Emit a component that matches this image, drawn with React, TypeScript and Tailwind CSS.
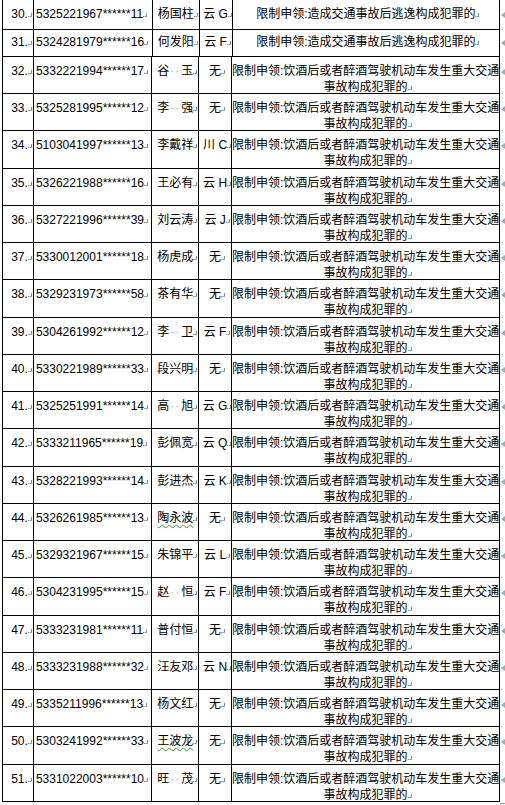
import React from 'react';

type Row = { no: string; id: string; name: string; plate: string; flee?: boolean; wavy?: boolean };

const rows: Row[] = [
  { no: '30', id: '5325221967******11', name: '杨国柱', plate: '云 G', flee: true },
  { no: '31', id: '5324281979******16', name: '何发阳', plate: '云 F', flee: true },
  { no: '32', id: '5332221994******17', name: '谷　玉', plate: '无' },
  { no: '33', id: '5325281995******12', name: '李　强', plate: '无' },
  { no: '34', id: '5103041997******13', name: '李戴祥', plate: '川 C' },
  { no: '35', id: '5326221988******16', name: '王必有', plate: '云 H' },
  { no: '36', id: '5327221996******39', name: '刘云涛', plate: '云 J' },
  { no: '37', id: '5330012001******18', name: '杨虎成', plate: '无' },
  { no: '38', id: '5329231973******58', name: '茶有华', plate: '无' },
  { no: '39', id: '5304261992******12', name: '李　卫', plate: '云 F' },
  { no: '40', id: '5330221989******33', name: '段兴明', plate: '无' },
  { no: '41', id: '5325251991******14', name: '高　旭', plate: '云 G' },
  { no: '42', id: '5333211965******19', name: '彭佩宽', plate: '云 Q' },
  { no: '43', id: '5328221993******14', name: '彭进杰', plate: '云 K' },
  { no: '44', id: '5326261985******13', name: '陶永波', plate: '无', wavy: true },
  { no: '45', id: '5329321967******15', name: '朱锦平', plate: '云 L' },
  { no: '46', id: '5304231995******15', name: '赵　恒', plate: '云 F' },
  { no: '47', id: '5333231981******11', name: '普付恒', plate: '无' },
  { no: '48', id: '5333231988******32', name: '汪友邓', plate: '云 N' },
  { no: '49', id: '5335211996******13', name: '杨文红', plate: '无' },
  { no: '50', id: '5303241992******33', name: '王波龙', plate: '无', wavy: true },
  { no: '51', id: '5331022003******10', name: '旺　茂', plate: '无' },
];

// word's paragraph mark, kept out of the line width like word does
const Mark = () => (
  <span className="inline-block w-[4px] -mr-[4px] align-baseline">
    <svg width="4" height="5" viewBox="0 0 4 5" className="block">
      <path d="M3.5 0 V3.5 H1.5" stroke="#8c8c8c" strokeWidth="1" fill="none" />
      <rect x="0" y="3" width="1" height="1" fill="#8c8c8c" />
    </svg>
  </span>
);

const Name = ({ text, wavy }: { text: string; wavy?: boolean }) => {
  if (text.includes('　')) {
    const [a, b] = text.split('　');
    return (
      <>
        {a}
        <span className="inline-block w-[12px] text-center tracking-[1px] text-[#9db4d4]">··</span>
        {b}
      </>
    );
  }
  if (wavy) return <span className="underline decoration-wavy decoration-[#2e9e2e] decoration-1 underline-offset-2">{text}</span>;
  return <>{text}</>;
};

const App = () => {
  let k = -1;
  return (
    <div className="w-[505px] min-h-[805px] bg-white text-black text-[12px] leading-[16px] font-['Liberation_Sans','Noto_Sans_CJK_SC',sans-serif]">
      <div className="pl-[2px]">
        {rows.map((r, i) => {
          let h = '';
          let pt = 'pt-[6px]';
          if (i === 0) h = 'h-[30px]';
          else if (i === 1) {
            h = 'h-[27px]';
            pt = 'pt-[4px]';
          } else {
            k++;
            h = k % 4 === 2 ? 'h-[38px]' : 'h-[37px]';
          }
          return (
            <div key={r.no} className={`flex ${h}`}>
              <div className={`w-[32px] border-l border-r border-b border-black text-right pr-[5px] whitespace-nowrap ${pt}`}>
                {r.no}.<Mark />
              </div>
              <div className={`w-[119px] border-r border-b border-black pl-[2px] whitespace-nowrap overflow-hidden ${pt}`}>
                {r.id}<Mark />
              </div>
              <div className={`w-[47px] border-r border-b border-black pl-[5px] whitespace-nowrap ${pt}`}>
                <Name text={r.name} wavy={r.wavy} />
                <Mark />
              </div>
              <div className={`w-[33px] border-r border-b border-black text-center whitespace-nowrap ${pt}`}>
                {r.plate}<Mark />
              </div>
              <div className={`w-[268px] border-r border-b border-black text-center whitespace-nowrap ${pt}`}>
                {r.flee ? (
                  <>
                    限制申领:造成交通事故后逃逸构成犯罪的<Mark />
                  </>
                ) : (
                  <>
                    限制申领:饮酒后或者醉酒驾驶机动车发生重大交通
                    <br />
                    事故构成犯罪的<Mark />
                  </>
                )}
              </div>
              <div className={`w-[5px] pl-[1px] ${pt}`}>
                <svg width="4" height="6" viewBox="0 0 4 6" className="inline-block align-middle">
                  <polygon points="4,0 0,3 4,6" fill="#a8a8a8" />
                </svg>
              </div>
            </div>
          );
        })}
        <div className="ml-[498px] mt-[1px] w-[7px] h-[1px] bg-[#a0a0a0]" />
      </div>
    </div>
  );
};

export default App;
